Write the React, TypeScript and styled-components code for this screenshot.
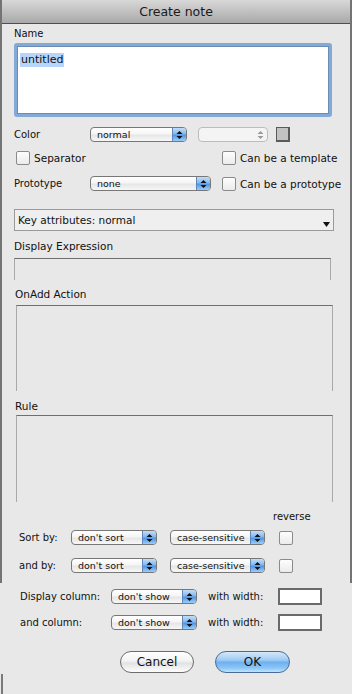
import React from "react";
import styled, { createGlobalStyle } from "styled-components";

const Global = createGlobalStyle`
  html, body { margin: 0; padding: 0; background: #e8e8e8; }
  body { font-family: "DejaVu Sans", "Liberation Sans", sans-serif; color: #111; }
`;

const Window = styled.div`
  width: 352px;
  height: 694px;
  overflow: hidden;
  background: #e8e8e8;
  display: flex;
  flex-direction: column;
`;

const Upper = styled.div`
  border-left: 2px solid #747474;
  border-right: 2px solid #747474;
  display: flex;
  flex-direction: column;
`;

const TitleBar = styled.div`
  height: 23px;
  border-bottom: 1px solid #4e4e4e;
  background: linear-gradient(#d8d8d8, #a9a9a9);
  text-align: center;
  font-size: 12.5px;
  line-height: 24px;
  color: #1a1a1a;
`;

const Body = styled.div`
  display: flex;
  flex-direction: column;
  align-items: flex-start;
  padding: 3px 0 10px 12px;
`;

const Label = styled.div<{ $size?: number; $mt?: number; $ml?: number }>`
  font-size: ${(p) => p.$size ?? 10}px;
  line-height: 13px;
  height: 13px;
  margin-top: ${(p) => p.$mt ?? 0}px;
  margin-left: ${(p) => p.$ml ?? 0}px;
  white-space: nowrap;
`;

const NameField = styled.div`
  margin-top: 3px;
  box-sizing: border-box;
  width: 318px;
  height: 74px;
  border: 3px solid #83a9d6;
  border-radius: 3px;
  background: #fff;
  box-shadow: inset 0 0 0 1px #6c8cb8;
  padding: 2px 3px;
`;

const Selected = styled.span`
  background: #b6d5fb;
  font-size: 11px;
  line-height: 14px;
  display: inline-block;
  padding: 0 1px;
`;

const Row = styled.div<{ $mt: number; $h?: number; $ml?: number }>`
  display: flex;
  align-items: center;
  height: ${(p) => p.$h ?? 15}px;
  margin-top: ${(p) => p.$mt}px;
  margin-left: ${(p) => p.$ml ?? 0}px;
`;

const FieldLabel = styled.span<{ $w: number; $size?: number }>`
  width: ${(p) => p.$w}px;
  flex: none;
  font-size: ${(p) => p.$size ?? 10}px;
  white-space: nowrap;
`;

const PopupBox = styled.div<{ $w: number; $mr?: number; $disabled?: boolean }>`
  box-sizing: border-box;
  flex: none;
  width: ${(p) => p.$w}px;
  height: 15px;
  margin-right: ${(p) => p.$mr ?? 0}px;
  border: 1px solid ${(p) => (p.$disabled ? "#bcbcbc" : "#777")};
  border-radius: 4px;
  background: ${(p) =>
    p.$disabled
      ? "#f4f4f4"
      : "linear-gradient(#ffffff 0%, #f5f5f5 45%, #e6e6e6 55%, #f7f7f7 100%)"};
  display: flex;
  align-items: stretch;
  overflow: hidden;
`;

const PopupText = styled.span`
  flex: 1;
  padding-left: 6px;
  font-size: 9.5px;
  line-height: 13px;
  white-space: nowrap;
`;

const ArrowCap = styled.span<{ $disabled?: boolean }>`
  width: 13px;
  flex: none;
  display: flex;
  align-items: center;
  justify-content: center;
  background: ${(p) =>
    p.$disabled
      ? "transparent"
      : "linear-gradient(#c4ddf6 0%, #84b8ee 45%, #4f95e4 55%, #9dcdf7 100%)"};
  border-left: 1px solid ${(p) => (p.$disabled ? "transparent" : "#5d86bb")};
`;

const Check = styled.span<{ $ml?: number }>`
  box-sizing: border-box;
  flex: none;
  width: 14px;
  height: 14px;
  margin-left: ${(p) => p.$ml ?? 0}px;
  border: 1px solid #8b8b8b;
  border-radius: 2px;
  background: linear-gradient(#fdfdfd, #ebebeb);
`;

const CheckText = styled.span`
  font-size: 10.5px;
  margin-left: 4px;
  white-space: nowrap;
`;

const CheckGroup = styled.div<{ $w?: number }>`
  display: flex;
  align-items: center;
  width: ${(p) => (p.$w ? `${p.$w}px` : "auto")};
  flex: none;
`;

const Swatch = styled.span`
  box-sizing: border-box;
  width: 14px;
  height: 15px;
  margin-left: 8px;
  background: #c2c2c2;
  border: 1px solid #5a5a5a;
  border-right-width: 2px;
  border-bottom-width: 2px;
`;

const KeyAttr = styled.div`
  margin-top: 18px;
  box-sizing: border-box;
  width: 320px;
  height: 22px;
  border: 1px solid #9a9a9a;
  background: #efefef;
  display: flex;
  align-items: center;
  padding-left: 3px;
  font-size: 10.5px;
`;

const KeyText = styled.span`
  flex: 1;
`;

const KeyArrow = styled.span`
  align-self: flex-end;
  margin: 0 3px 3px 0;
  display: flex;
`;

const SunkenBox = styled.div<{ $h: number; $mt: number; $ml?: number }>`
  box-sizing: border-box;
  width: 317px;
  height: ${(p) => p.$h}px;
  margin-top: ${(p) => p.$mt}px;
  margin-left: ${(p) => p.$ml ?? 0}px;
  border-top: 1px solid #6f6f6f;
  border-left: 1px solid #a9a9a9;
  border-right: 1px solid #a9a9a9;
`;

const Lower = styled.div`
  display: flex;
  flex-direction: column;
  padding-left: 20px;
`;

const WidthBox = styled.span`
  box-sizing: border-box;
  width: 44px;
  height: 17px;
  background: #fff;
  border: 2px solid #6a6a6a;
  flex: none;
`;

const ButtonRow = styled.div`
  display: flex;
  gap: 21px;
  margin-top: 20px;
  margin-left: 120px;
  height: 22px;
`;

const Button = styled.div<{ $primary?: boolean }>`
  box-sizing: border-box;
  width: ${(p) => (p.$primary ? 75 : 74)}px;
  height: 22px;
  border-radius: 11px;
  border: 1px solid ${(p) => (p.$primary ? "#4a6b98" : "#6d6d6d")};
  background: ${(p) =>
    p.$primary
      ? "linear-gradient(#d5e8fa 0%, #9ecbf4 40%, #6fb0ef 52%, #8dc6f6 80%, #bfe4fd 100%)"
      : "linear-gradient(#ffffff 0%, #f3f3f3 45%, #e2e2e2 55%, #f4f4f4 85%, #fdfdfd 100%)"};
  display: flex;
  align-items: center;
  justify-content: center;
  font-size: 12px;
  color: #111;
`;

const Stub = styled.div`
  margin-top: auto;
  margin-left: 1px;
  height: 20px;
  width: 0;
  border-left: 2px solid #7a7a7a;
`;

const Arrows = ({ disabled }: { disabled?: boolean }) => (
  <svg width="7" height="10" viewBox="0 0 7 10">
    <polygon points="0.5,4 3.5,1 6.5,4" fill={disabled ? "#9a9a9a" : "#111"} />
    <polygon points="0.5,6 3.5,9 6.5,6" fill={disabled ? "#9a9a9a" : "#111"} />
  </svg>
);

const Popup = ({
  w,
  text,
  mr,
  disabled,
}: {
  w: number;
  text?: string;
  mr?: number;
  disabled?: boolean;
}) => (
  <PopupBox $w={w} $mr={mr} $disabled={disabled}>
    <PopupText>{text}</PopupText>
    <ArrowCap $disabled={disabled}>
      <Arrows disabled={disabled} />
    </ArrowCap>
  </PopupBox>
);

export default function App() {
  return (
    <Window>
      <Global />
      <Upper>
        <TitleBar>Create note</TitleBar>
        <Body>
          <Label>Name</Label>
          <NameField>
            <Selected>untitled</Selected>
          </NameField>

          <Row $mt={10}>
            <FieldLabel $w={76}>Color</FieldLabel>
            <Popup w={97} text="normal" mr={11} />
            <Popup w={70} disabled />
            <Swatch />
          </Row>

          <Row $mt={9} $h={14} $ml={2}>
            <CheckGroup $w={206}>
              <Check />
              <CheckText>Separator</CheckText>
            </CheckGroup>
            <CheckGroup>
              <Check />
              <CheckText>Can be a template</CheckText>
            </CheckGroup>
          </Row>

          <Row $mt={11}>
            <FieldLabel $w={76}>Prototype</FieldLabel>
            <Popup w={121} text="none" mr={11} />
            <CheckGroup>
              <Check />
              <CheckText>Can be a prototype</CheckText>
            </CheckGroup>
          </Row>

          <KeyAttr>
            <KeyText>Key attributes: normal</KeyText>
            <KeyArrow>
              <svg width="7" height="5" viewBox="0 0 7 5">
                <polygon points="0,0 7,0 3.5,5" fill="#111" />
              </svg>
            </KeyArrow>
          </KeyAttr>

          <Label $size={10.5} $mt={9}>Display Expression</Label>
          <SunkenBox $h={22} $mt={5} />

          <Label $size={10.5} $mt={8} $ml={1}>OnAdd Action</Label>
          <SunkenBox $h={86} $mt={4} $ml={2} />

          <Label $size={10.5} $mt={9} $ml={1}>Rule</Label>
          <SunkenBox $h={87} $mt={2} $ml={2} />

          <Label $mt={8} $ml={259}>reverse</Label>

          <Row $mt={7} $ml={5}>
            <FieldLabel $w={52}>Sort by:</FieldLabel>
            <Popup w={86} text="don't sort" mr={13} />
            <Popup w={95} text="case-sensitive" mr={14} />
            <Check />
          </Row>

          <Row $mt={13} $ml={5}>
            <FieldLabel $w={52}>and by:</FieldLabel>
            <Popup w={86} text="don't sort" mr={13} />
            <Popup w={95} text="case-sensitive" mr={14} />
            <Check />
          </Row>
        </Body>
      </Upper>

      <Lower>
        <Row $mt={5} $h={17}>
          <FieldLabel $w={91}>Display column:</FieldLabel>
          <Popup w={86} text="don't show" mr={11} />
          <FieldLabel $w={70}>with width:</FieldLabel>
          <WidthBox />
        </Row>
        <Row $mt={9} $h={17}>
          <FieldLabel $w={91}>and column:</FieldLabel>
          <Popup w={86} text="don't show" mr={11} />
          <FieldLabel $w={70}>with width:</FieldLabel>
          <WidthBox />
        </Row>
      </Lower>

      <ButtonRow>
        <Button>Cancel</Button>
        <Button $primary>OK</Button>
      </ButtonRow>
      <Stub />
    </Window>
  );
}
